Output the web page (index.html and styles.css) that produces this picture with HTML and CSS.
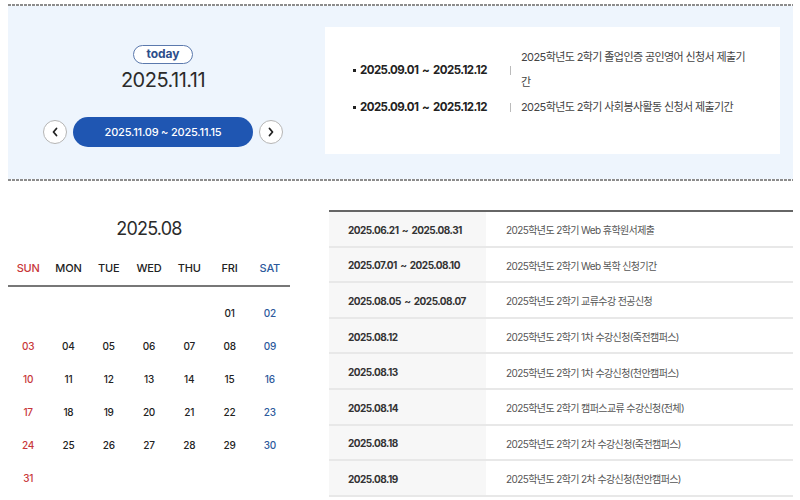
FILE: index.html
```html
<!DOCTYPE html>
<html lang="ko">
<head>
    <meta charset="UTF-8">
    <meta name="viewport" content="width=device-width, initial-scale=1.0">
    <title>학사일정</title>
    <link rel="stylesheet" href="styles.css">
</head>
<body>
    <div class="wrap">
        <section class="today-area">
            <div class="today-box">
                <span class="today-badge">today</span>
                <p class="today-date">2025.11.11</p>
                <div class="week-nav">
                    <button type="button" class="nav-btn" aria-label="이전 주">
                        <svg width="10" height="10" viewBox="0 0 10 10"><path d="M6.5 1.5 L3.5 5 L6.5 8.5" fill="none" stroke="#222" stroke-width="1.8" stroke-linecap="round" stroke-linejoin="round"/></svg>
                    </button>
                    <span class="week-range">2025.11.09 ~ 2025.11.15</span>
                    <button type="button" class="nav-btn" aria-label="다음 주">
                        <svg width="10" height="10" viewBox="0 0 10 10"><path d="M3.5 1.5 L6.5 5 L3.5 8.5" fill="none" stroke="#222" stroke-width="1.8" stroke-linecap="round" stroke-linejoin="round"/></svg>
                    </button>
                </div>
            </div>
            <div class="today-list">
                <ul>
                    <li>
                        <strong class="period">2025.09.01 ~ 2025.12.12</strong>
                        <span class="bar"></span>
                        <span class="subject">2025학년도 2학기 졸업인증 공인영어 신청서 제출기간</span>
                    </li>
                    <li>
                        <strong class="period">2025.09.01 ~ 2025.12.12</strong>
                        <span class="bar"></span>
                        <span class="subject">2025학년도 2학기 사회봉사활동 신청서 제출기간</span>
                    </li>
                </ul>
            </div>
        </section>

        <section class="month-area">
            <div class="calendar">
                <h2 class="month-title">2025.08</h2>
                <div class="week-head">
                    <span class="sun">SUN</span>
                    <span>MON</span>
                    <span>TUE</span>
                    <span>WED</span>
                    <span>THU</span>
                    <span>FRI</span>
                    <span class="sat">SAT</span>
                </div>
                <div class="days" id="days"></div>
            </div>

            <table class="schedule">
                <tbody>
                    <tr><th>2025.06.21 ~ 2025.08.31</th><td>2025학년도 2학기 Web 휴학원서제출</td></tr>
                    <tr><th>2025.07.01 ~ 2025.08.10</th><td>2025학년도 2학기 Web 복학 신청기간</td></tr>
                    <tr><th>2025.08.05 ~ 2025.08.07</th><td>2025학년도 2학기 교류수강 전공신청</td></tr>
                    <tr><th>2025.08.12</th><td>2025학년도 2학기 1차 수강신청(죽전캠퍼스)</td></tr>
                    <tr><th>2025.08.13</th><td>2025학년도 2학기 1차 수강신청(천안캠퍼스)</td></tr>
                    <tr><th>2025.08.14</th><td>2025학년도 2학기 캠퍼스교류 수강신청(전체)</td></tr>
                    <tr><th>2025.08.18</th><td>2025학년도 2학기 2차 수강신청(죽전캠퍼스)</td></tr>
                    <tr><th>2025.08.19</th><td>2025학년도 2학기 2차 수강신청(천안캠퍼스)</td></tr>
                </tbody>
            </table>
        </section>
    </div>
    <script>
        // 2025년 8월 달력 그리기 (1일 = 금요일)
        function drawMonth(year, month) {
            const box = document.getElementById("days");
            const first = new Date(year, month - 1, 1).getDay();
            const last = new Date(year, month, 0).getDate();
            box.innerHTML = "";

            for (let i = 0; i < first; i++) {
                box.appendChild(document.createElement("span"));
            }
            for (let d = 1; d <= last; d++) {
                const cell = document.createElement("span");
                const dow = (first + d - 1) % 7;
                cell.textContent = String(d).padStart(2, "0");
                if (dow === 0) cell.className = "sun";
                if (dow === 6) cell.className = "sat";
                box.appendChild(cell);
            }
        }
        drawMonth(2025, 8);
    </script>
</body>
</html>
```

FILE: styles.css
```css
/* 기본 */
body {
    margin: 0;
    font-family: Inter, "Noto Sans CJK KR", sans-serif;
    color: #333;
    background: #fff;
}
.wrap {
    padding: 4px 7px 0 8px;
}
ul {
    margin: 0;
    padding: 0;
    list-style: none;
}

/* 오늘 일정 */
.today-area {
    display: flex;
    padding: 21px 13px 25px 0;
    border-top: 2px solid transparent;
    border-bottom: 2px solid transparent;
    background:
        repeating-linear-gradient(90deg, #8c8c8c 0 3px, transparent 3px 4px) top / 100% 2px no-repeat border-box,
        repeating-linear-gradient(90deg, #8c8c8c 0 3px, transparent 3px 4px) bottom / 100% 2px no-repeat border-box,
        #eef5fd padding-box;
}
.today-box {
    width: 310px;
    display: flex;
    flex-direction: column;
    align-items: center;
    padding-top: 18px;
}
.today-badge {
    display: inline-block;
    padding: 0 12px;
    height: 17px;
    line-height: 16px;
    font-size: 12px;
    font-weight: 700;
    color: #2d4f8c;
    background: #fff;
    border: 1px solid #5b79ad;
    border-radius: 10px;
}
.today-date {
    margin: 3px 0 0;
    font-size: 20px;
    line-height: 26px;
    letter-spacing: -0.5px;
    color: #2b2b2b;
}
.week-nav {
    display: flex;
    align-items: center;
    gap: 6px;
    margin-top: 24px;
}
.nav-btn {
    width: 24px;
    height: 24px;
    padding: 0;
    display: flex;
    align-items: center;
    justify-content: center;
    background: #fff;
    border: 1px solid #b5b5b5;
    border-radius: 50%;
    cursor: pointer;
}
.week-range {
    display: inline-block;
    width: 180px;
    height: 30px;
    line-height: 30px;
    text-align: center;
    font-size: 11px;
    font-weight: 500;
    letter-spacing: -0.2px;
    color: #fff;
    background: #1f56b2;
    border-radius: 15px;
}
.today-list {
    flex: 1;
    margin-left: 7px;
    height: 127px;
    padding: 18px 28px 0 28px;
    box-sizing: border-box;
    background: #fff;
}
.today-list li {
    display: flex;
    align-items: center;
    line-height: 25px;
}
.today-list .period {
    position: relative;
    width: 150px;
    flex: none;
    padding-left: 7px;
    font-size: 11.5px;
    font-weight: 700;
    letter-spacing: -0.55px;
    word-spacing: 1.5px;
    color: #222;
}
.today-list .period::before {
    content: "";
    position: absolute;
    left: 0;
    top: 11px;
    width: 3px;
    height: 3px;
    background: #222;
}
.today-list .bar {
    width: 1px;
    height: 9px;
    flex: none;
    margin-right: 10px;
    background: #bbb;
}
.today-list .subject {
    font-size: 11px;
    letter-spacing: -0.6px;
    color: #444;
}

/* 월간 달력 + 일정표 */
.month-area {
    display: flex;
    align-items: flex-start;
    justify-content: space-between;
    padding-top: 29px;
}
.calendar {
    width: 282px;
}
.month-title {
    margin: 8px 0 0;
    text-align: center;
    font-size: 18px;
    font-weight: 400;
    line-height: 22px;
    letter-spacing: -0.8px;
    color: #2b2b2b;
}
.week-head, .days {
    display: grid;
    grid-template-columns: repeat(7, 1fr);
    text-align: center;
}
.week-head {
    height: 47px;
    line-height: 28px;
    padding-top: 14px;
    box-sizing: border-box;
    border-bottom: 2px solid #777;
    font-size: 11px;
    font-weight: 500;
    letter-spacing: -0.2px;
    color: #222;
}
.days {
    padding-top: 10px;
    font-size: 10px;
    font-weight: 500;
    letter-spacing: -0.2px;
    color: #222;
}
.days span {
    height: 33px;
    line-height: 33px;
}
.sun { color: #c8373a; }
.sat { color: #2d5a9c; }

.schedule {
    width: 464px;
    border-collapse: collapse;
    border-top: 2px solid #666;
}
.schedule th, .schedule td {
    height: 31.6px;
    padding: 2px 0 0;
    border-bottom: 2px solid #e8e8e8;
    text-align: left;
}
.schedule th {
    width: 138px;
    padding-left: 19px;
    font-size: 10px;
    font-weight: 700;
    letter-spacing: -0.5px;
    word-spacing: 1.5px;
    color: #333;
    background: #f7f7f7;
}
.schedule td {
    padding-left: 20px;
    font-size: 10px;
    letter-spacing: -0.6px;
    color: #555;
}
```
